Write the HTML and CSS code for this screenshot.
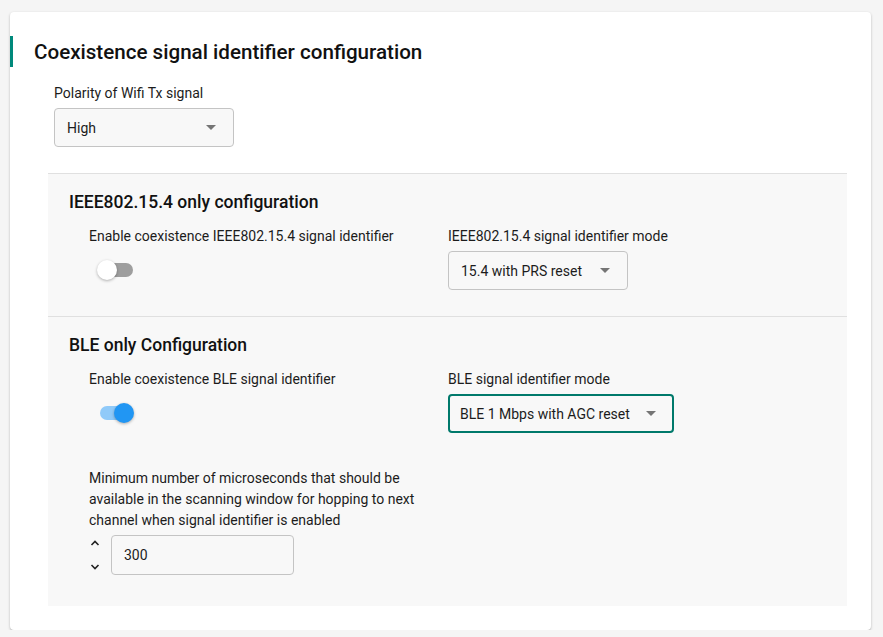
FILE: index.html
```html
<!DOCTYPE html>
<html lang="en">
<head>
  <meta charset="UTF-8">
  <title>Coexistence signal identifier configuration</title>
  <link rel="stylesheet" href="styles.css">
</head>
<body>
  <div class="card">
    <h2 class="card-title">Coexistence signal identifier configuration</h2>

    <div class="field top-field">
      <div class="label">Polarity of Wifi Tx signal</div>
      <div class="select w-180">
        <span>High</span>
        <span class="caret"></span>
      </div>
    </div>

    <div class="section">
      <h3 class="section-title">IEEE802.15.4 only configuration</h3>
      <div class="row">
        <div class="col">
          <div class="label">Enable coexistence IEEE802.15.4 signal identifier</div>
          <div class="switch">
            <span class="track"></span>
            <span class="knob"></span>
          </div>
        </div>
        <div class="col">
          <div class="label">IEEE802.15.4 signal identifier mode</div>
          <div class="select w-180">
            <span>15.4 with PRS reset</span>
            <span class="caret"></span>
          </div>
        </div>
      </div>
    </div>

    <div class="section last">
      <h3 class="section-title">BLE only Configuration</h3>
      <div class="row">
        <div class="col">
          <div class="label">Enable coexistence BLE signal identifier</div>
          <div class="switch on">
            <span class="track"></span>
            <span class="knob"></span>
          </div>
        </div>
        <div class="col">
          <div class="label">BLE signal identifier mode</div>
          <div class="select focused">
            <span>BLE 1 Mbps with AGC reset</span>
            <span class="caret"></span>
          </div>
        </div>
      </div>

      <div class="number-field">
        <div class="label multi">Minimum number of microseconds that should be available in the scanning window for hopping to next channel when signal identifier is enabled</div>
        <div class="number-row">
          <div class="stepper">
            <svg width="12" height="8" viewBox="0 0 12 8"><path d="M2.5 6 L6 2.5 L9.5 6" fill="none" stroke="#222" stroke-width="1.6"/></svg>
            <svg width="12" height="8" viewBox="0 0 12 8"><path d="M2.5 2 L6 5.5 L9.5 2" fill="none" stroke="#222" stroke-width="1.6"/></svg>
          </div>
          <div class="number-input">300</div>
        </div>
      </div>
    </div>
  </div>
</body>
</html>
```

FILE: styles.css
```css
body {
  margin: 0;
  padding: 12px 12px 0 10px;
  background-color: #f5f5f5;
  font-family: Roboto, "Noto Sans", sans-serif;
  color: #212121;
}

.card {
  width: 861px;
  height: 618px;
  box-sizing: border-box;
  padding-top: 24px;
  background-color: #fff;
  border-radius: 4px;
  box-shadow: 0 1px 3px rgba(0, 0, 0, 0.2), 0 1px 1px rgba(0, 0, 0, 0.12);
}

.card-title {
  margin: 0;
  height: 31px;
  line-height: 33px;
  padding-left: 21px;
  border-left: 3px solid #00897b;
  font-size: 20.6px;
  font-weight: 500;
  color: #111;
}

.label {
  font-size: 14px;
  line-height: 16px;
  color: #1c1c1c;
}

.top-field {
  margin: 18px 0 0 44px;
}

.top-field .label {
  margin-bottom: 7px;
}

.select {
  display: flex;
  align-items: center;
  justify-content: space-between;
  height: 39px;
  box-sizing: border-box;
  padding: 0 17px 0 12px;
  background-color: #f8f8f8;
  border: 1px solid #c4c4c4;
  border-radius: 4px;
  font-size: 14px;
  color: #1c1c1c;
}

.w-180 {
  width: 180px;
}

.caret {
  width: 0;
  height: 0;
  border-left: 5px solid transparent;
  border-right: 5px solid transparent;
  border-top: 5px solid #757575;
}

.select.focused {
  width: 226px;
  border: 2px solid #00796b;
  padding: 0 16px 0 10px;
  gap: 16px;
}

.section {
  margin: 26px 24px 0 38px;
  padding: 18px 0 26px 21px;
  background-color: #f8f8f8;
  border-top: 1px solid #e0e0e0;
}

.section + .section {
  margin-top: 0;
}

.section.last {
  padding-bottom: 31px;
}

.section-title {
  margin: 0 0 16px;
  font-size: 17.5px;
  line-height: 20px;
  font-weight: 500;
  color: #111;
}

.row {
  display: grid;
  grid-template-columns: 359px 1fr;
  margin-left: 20px;
}

.row .label {
  margin-bottom: 7px;
}

.switch {
  position: relative;
  width: 36px;
  height: 20px;
  margin: 16px 0 0 8px;
}

.switch .track {
  position: absolute;
  left: 2px;
  top: 3px;
  width: 34px;
  height: 14px;
  border-radius: 7px;
  background-color: #9e9e9e;
}

.switch .knob {
  position: absolute;
  left: 0;
  top: 0;
  width: 20px;
  height: 20px;
  border-radius: 50%;
  background-color: #fff;
  box-shadow: 0 1px 3px rgba(0, 0, 0, 0.3);
}

.switch.on .track {
  background-color: #90caf9;
  left: 3px;
  width: 32px;
}

.switch.on .knob {
  left: 17px;
  background-color: #2196f3;
}

.number-field {
  margin: 35px 0 0 20px;
  width: 345px;
}

.label.multi {
  line-height: 21px;
}

.number-row {
  display: flex;
  align-items: center;
  margin-top: 4px;
}

.stepper {
  display: flex;
  flex-direction: column;
  justify-content: space-between;
  height: 32px;
  width: 22px;
}

.number-input {
  width: 183px;
  height: 40px;
  box-sizing: border-box;
  padding: 0 12px;
  display: flex;
  align-items: center;
  background-color: #f8f8f8;
  border: 1px solid #c4c4c4;
  border-radius: 4px;
  font-size: 14px;
  color: #1c1c1c;
}
```
